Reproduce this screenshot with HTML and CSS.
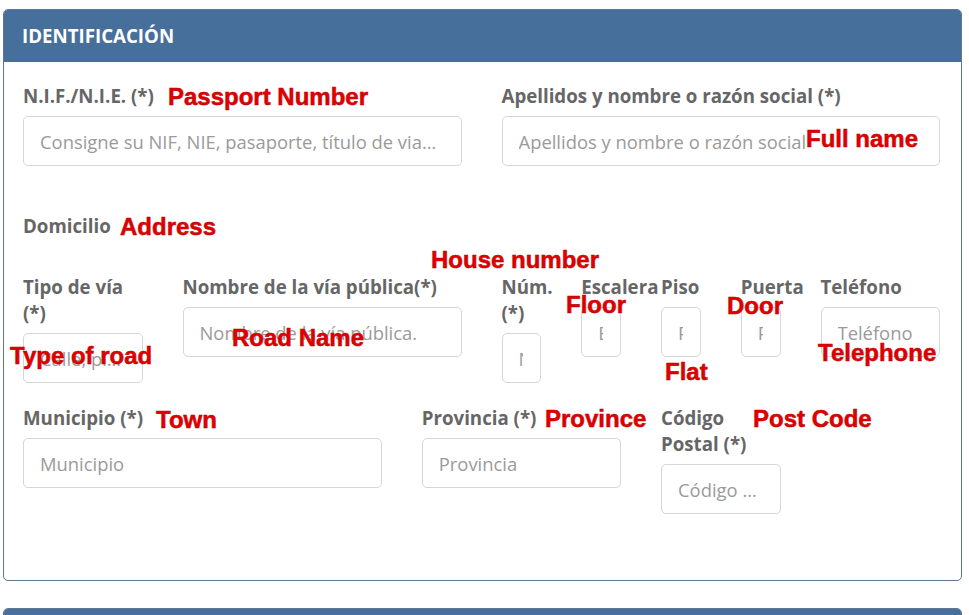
FILE: index.html
```html
<!DOCTYPE html>
<html lang="es">
  <head>
    <meta charset="UTF-8" />
    <meta name="viewport" content="width=device-width, initial-scale=1.0" />
    <title>Identificación</title>
    <link rel="stylesheet" href="styles.css">
  </head>
  <body>
    <main class="page">
      <section class="panel">
        <div class="panel-heading">IDENTIFICACIÓN</div>
        <div class="panel-body">
          <div class="row">
            <div class="field span-6">
              <label>N.I.F./N.I.E. (*)</label>
              <input class="long" type="text" placeholder="Consigne su NIF, NIE, pasaporte, título de viaje o documento de identidad" />
            </div>
            <div class="field span-6">
              <label>Apellidos y nombre o razón social (*)</label>
              <input type="text" placeholder="Apellidos y nombre o razón social" />
            </div>
          </div>

          <h4 class="subhead">Domicilio</h4>

          <div class="row">
            <div class="field span-2">
              <label>Tipo de vía (*)</label>
              <input type="text" placeholder="Calle, plaza..." />
            </div>
            <div class="field span-4">
              <label>Nombre de la vía pública(*)</label>
              <input type="text" placeholder="Nombre de la vía pública." />
            </div>
            <div class="field span-1">
              <label>Núm. (*)</label>
              <input type="text" placeholder="Núm." />
            </div>
            <div class="field span-1">
              <label>Escalera</label>
              <input type="text" placeholder="Escalera" />
            </div>
            <div class="field span-1">
              <label>Piso</label>
              <input type="text" placeholder="Piso" />
            </div>
            <div class="field span-1">
              <label>Puerta</label>
              <input type="text" placeholder="Puerta" />
            </div>
            <div class="field span-2">
              <label>Teléfono</label>
              <input type="text" placeholder="Teléfono" />
            </div>
          </div>

          <div class="row">
            <div class="field span-5">
              <label>Municipio (*)</label>
              <input type="text" placeholder="Municipio" />
            </div>
            <div class="field span-3">
              <label>Provincia (*)</label>
              <input type="text" placeholder="Provincia" />
            </div>
            <div class="field span-2">
              <label>Código Postal (*)</label>
              <input type="text" placeholder="Código Postal" />
            </div>
          </div>
        </div>
      </section>

      <section class="panel panel-next">
        <div class="panel-heading">&nbsp;</div>
      </section>

      <!-- translation notes pasted over the form -->
      <span class="note" style="left:168px;top:84px">Passport Number</span>
      <span class="note" style="left:806px;top:126px">Full name</span>
      <span class="note" style="left:120px;top:214px">Address</span>
      <span class="note" style="left:431px;top:247px">House number</span>
      <span class="note" style="left:566px;top:292px">Floor</span>
      <span class="note" style="left:727px;top:293px">Door</span>
      <span class="note" style="left:232px;top:325px">Road Name</span>
      <span class="note" style="left:818px;top:340px">Telephone</span>
      <span class="note" style="left:10px;top:343px">Type of road</span>
      <span class="note" style="left:665px;top:359px">Flat</span>
      <span class="note" style="left:156px;top:407px">Town</span>
      <span class="note" style="left:545px;top:406px">Province</span>
      <span class="note" style="left:753px;top:406px">Post Code</span>
    </main>
  </body>
</html>
```

FILE: styles.css
```css
* {
  padding: 0;
  margin: 0;
  box-sizing: border-box;
}
body {
  background-color: #fff;
  font-family: "Open Sans", "DejaVu Sans", sans-serif;
  font-size: 18.7px;
  line-height: 26px;
  color: #666;
}
.page {
  position: relative;
  padding: 9px 7px 0 3px;
  height: 615px;
  overflow: hidden;
}

.panel {
  border: 1px solid #5d7890;
  border-radius: 5px;
  overflow: hidden;
  background-color: #fff;
}
.panel-heading {
  background-color: #46709b;
  color: #fff;
  font-weight: 700;
  font-size: 18.7px;
  height: 53px;
  padding: 14px 19px 0;
  margin: -1px -1px 0;
}
.panel-body {
  padding: 21px 21px 66px 19px;
}
.panel-next {
  margin-top: 27px;
  height: 40px;
}

.row {
  display: grid;
  grid-template-columns: repeat(12, 1fr);
  column-gap: 40px;
  align-items: start;
  margin-bottom: 22px;
}
.row:last-child {
  margin-bottom: 0;
}
.span-1 { grid-column: span 1; }
.span-2 { grid-column: span 2; }
.span-3 { grid-column: span 3; }
.span-4 { grid-column: span 4; }
.span-5 { grid-column: span 5; }
.span-6 { grid-column: span 6; }

.field {
  min-width: 0;
}
.field label {
  display: block;
  font-weight: 700;
  white-space: normal;
  margin-bottom: 7px;
}
.field input {
  display: block;
  width: 100%;
  height: 50px;
  padding: 0 17px 0 16px;
  border: 1px solid #d6d6d6;
  border-radius: 5px;
  font-family: inherit;
  font-size: 18.4px;
  color: #555;
  background-color: #fff;
  text-overflow: ellipsis;
}
.field input.long {
  padding-right: 23px;
}
.span-1 input {
  text-overflow: clip;
}
.field input::placeholder {
  color: #9a9a9a;
}

.subhead {
  font-size: 18.7px;
  font-weight: 700;
  margin: 47px 0 35px;
}

.note {
  position: absolute;
  font-family: "Liberation Sans", Arial, sans-serif;
  font-weight: 700;
  font-size: 24px;
  line-height: 26px;
  color: #e00000;
  -webkit-text-stroke: 0.5px #c00000;
  white-space: nowrap;
}
```
